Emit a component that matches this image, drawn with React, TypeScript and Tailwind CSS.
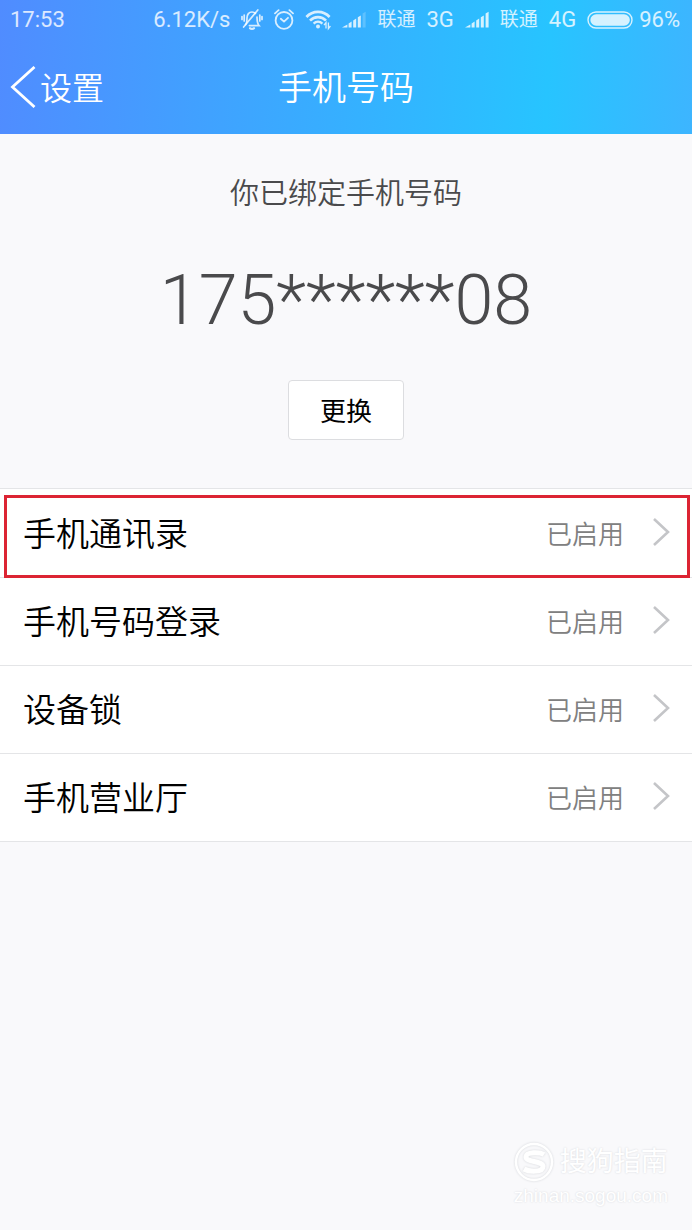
import React from 'react';

const rows = [
  { label: '手机通讯录', status: '已启用', marked: true },
  { label: '手机号码登录', status: '已启用', marked: false },
  { label: '设备锁', status: '已启用', marked: false },
  { label: '手机营业厅', status: '已启用', marked: false },
];

const MuteIcon = () => (
  <svg className="h-[22px] w-[22px]" viewBox="0 0 22 22" fill="none" stroke="currentColor" strokeWidth="1.7" strokeLinecap="round">
    <path d="M4.6 15.6C6 14 6 12 6 9C6 5.4 8 3 11 3C12.4 3 13.6 3.5 14.4 4.4M16 8C16.1 11.5 16 14.5 18 16.6H8.4" />
    <path d="M16.8 1L2.6 18" />
    <path d="M3.2 6v6M1 7.5v3M18.8 6v6M21 7.5v3" />
    <path d="M9 19.2C10 20.2 12 20.2 13 19.2" strokeWidth="2.2" />
  </svg>
);

const AlarmIcon = () => (
  <svg className="h-[22px] w-[20px]" viewBox="0 0 20 22" fill="none" stroke="currentColor" strokeWidth="1.8" strokeLinecap="round" strokeLinejoin="round">
    <circle cx="10" cy="11.4" r="8.4" />
    <path d="M6.8 9.8L10 12.6L14 8.8" />
    <path d="M1 4.4L4.6 1.2M19 4.4L15.4 1.2" />
  </svg>
);

const WifiIcon = () => (
  <svg className="h-[22px] w-[26px]" viewBox="0 0 26 22" fill="none" stroke="currentColor">
    <path d="M1.4 8C7.6 1.2 18.4 1.2 24.6 8" strokeWidth="2.6" />
    <path d="M5 11.6C9.4 7 16.6 7 21 11.6" strokeWidth="2.6" />
    <path d="M8.6 14.6C11.2 12 14.8 12 17.4 14.6" strokeWidth="2.2" />
    <circle cx="13" cy="17.4" r="2" fill="currentColor" stroke="none" />
    <path d="M21 19.6v-6l-2 2.6M23.4 13.6v6l2-2.6" strokeWidth="1.3" />
  </svg>
);

const SignalIcon = ({ full }: { full: boolean }) => (
  <svg className="h-[22px] w-[24px]" viewBox="0 0 24 22" fill="currentColor">
    <path d="M0 18.6L5.4 15.4V18.6Z" />
    <path d="M6.6 14.4L9.6 12.6V18.6H6.6Z" />
    <path d="M11.2 11.4L14.2 9.6V18.6H11.2Z" />
    <path d="M15.8 8.2L18.8 6.4V18.6H15.8Z" />
    <path d="M20.6 4.6L23.6 2.8V18.6H20.6Z" opacity={full ? 1 : 0.25} />
  </svg>
);

const BatteryIcon = () => (
  <svg className="h-[18px] w-[46px]" viewBox="0 0 46 18" fill="none">
    <rect x="1" y="1" width="44" height="16" rx="8" stroke="currentColor" strokeWidth="1.4" />
    <rect x="3.4" y="3.2" width="39.4" height="11.6" rx="5.8" fill="currentColor" />
  </svg>
);

const StatusBar = () => (
  <div className="flex h-10 items-center justify-between pr-3 pl-[10px] text-[22px] leading-6 text-white/80">
    <span>17:53</span>
    <div className="flex items-center gap-[11px]">
      <span>6.12K/s</span>
      <MuteIcon />
      <AlarmIcon />
      <WifiIcon />
      <SignalIcon full={false} />
      <span className="text-[19px]">联通</span>
      <span>3G</span>
      <SignalIcon full />
      <span className="text-[19px]">联通</span>
      <span>4G</span>
      <div className="flex items-center gap-[6px]">
        <BatteryIcon />
        <span>96%</span>
      </div>
    </div>
  </div>
);

const Watermark = () => (
  <div className="mt-auto mr-6 mb-[22px] self-end text-white [text-shadow:0_0_2px_#d4d6da]">
    <div className="flex items-center gap-[6px]">
      <svg className="h-10 w-10 drop-shadow-[0_0_1px_#d4d6da]" viewBox="0 0 40 40" fill="none" stroke="currentColor">
        <circle cx="20" cy="20" r="18" strokeWidth="2.4" />
        <path d="M30 12.5C26 10 12 9.5 12 15C12 20.5 29 18.5 29 24.5C29 30.5 15 30 10 27" strokeWidth="5" />
      </svg>
      <span className="text-[27px] leading-10">搜狗指南</span>
    </div>
    <p className="mt-[2px] text-[19px] leading-6 font-['Liberation_Sans',sans-serif]">zhinan.sogou.com</p>
  </div>
);

const App = () => {
  return (
    <div className="flex min-h-screen flex-col bg-[#f9f9fb] font-['Roboto','Noto_Sans_CJK_SC',sans-serif]">
      <header className="bg-[linear-gradient(93deg,#508cff_0%,#27c4ff_79%,#3db5ff_100%)] pb-px text-white">
        <StatusBar />
        <nav className="grid h-[93px] grid-cols-3 items-center">
          <a href="#settings" className="flex items-center gap-1 pl-[10px] text-[32px] font-[350]">
            <svg className="h-[42px] w-[26px]" viewBox="0 0 26 42" fill="none" stroke="currentColor" strokeWidth="2.8">
              <path d="M24.5 1L2.5 21L24.5 41" />
            </svg>
            <span className="pt-1">设置</span>
          </a>
          <h1 className="pt-1 text-center text-[34px] font-[350]">手机号码</h1>
        </nav>
      </header>

      <section className="flex flex-col items-center pt-[42px] pb-12 text-[#4a4a4c]">
        <p className="text-[29px] leading-9 font-[350]">你已绑定手机号码</p>
        <p className="mt-[45px] text-[70px] leading-[86px] font-[350]">175******08</p>
        <button type="button" className="mt-[37px] h-[60px] w-[116px] rounded border border-[#dcdde0] bg-white pt-1 text-[26px] text-black">
          更换
        </button>
      </section>

      <ul className="border-t border-[#e4e5e7] bg-white pt-px">
        {rows.map((row) => (
          <li key={row.label} className="relative border-b border-[#e4e5e7]">
            <a href="#detail" className="flex h-[87px] items-center pt-[3px] pr-[22px] pl-[23px]">
              <span className="text-[33px] font-[350] text-black">{row.label}</span>
              <span className="ml-auto text-[26px] font-[350] text-[#808080]">{row.status}</span>
              <svg className="mb-1.5 ml-7 h-7 w-[18px]" viewBox="0 0 18 28" fill="none" stroke="#c4c5c8" strokeWidth="2.6">
                <path d="M2 1L16 14L2 27" />
              </svg>
            </a>
            {row.marked && (
              <div className="pointer-events-none absolute top-[5px] right-[2px] -bottom-px left-1 z-10 border-3 border-[#dc2433]" />
            )}
          </li>
        ))}
      </ul>

      <Watermark />
    </div>
  );
};

export default App;
